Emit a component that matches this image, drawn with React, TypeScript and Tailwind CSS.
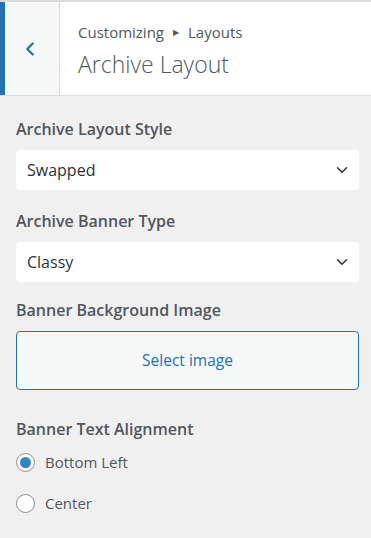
import { ChevronDown, ChevronLeft } from 'lucide-react';

function Label({ children }: { children: string }) {
    return <div className="text-[16px] font-semibold text-[#50575e] leading-5 mb-[11px]">{children}</div>;
}

function Select({ value }: { value: string }) {
    return (
        <div className="h-10 bg-white rounded-[4px] flex items-center justify-between pl-[11px] pr-[8px]">
            <span className="text-[16px] text-[#2c3338]">{value}</span>
            <ChevronDown className="w-[18px] h-[18px] text-[#2c3338]" strokeWidth={2} />
        </div>
    );
}

function Radio({ label, checked }: { label: string; checked?: boolean }) {
    return (
        <label className="flex items-center gap-[10px] h-6">
            <span className="w-[19px] h-[19px] rounded-full border border-[#8c8f94] bg-white flex items-center justify-center">
                {checked && <span className="w-[11px] h-[11px] rounded-full bg-[#3582c4]" />}
            </span>
            <span className="text-[15px] text-[#50575e]">{label}</span>
        </label>
    );
}

export default function App() {
    return (
        <div className="w-[371px] h-[538px] bg-[#f0f0f1] font-['Open_Sans',sans-serif] overflow-hidden">
            <div className="h-[2px] bg-[#dcdcde]" />
            <div className="flex h-[94px] bg-white border-b border-[#dcdcde]">
                <div className="w-[60px] flex bg-[#f6f7f7] border-r border-[#dcdcde]">
                    <div className="w-[5px] bg-[#2271b1]" />
                    <div className="flex-1 flex items-center justify-center pr-[4px]">
                        <ChevronLeft className="w-[22px] h-[22px] text-[#2271b1]" strokeWidth={2.5} />
                    </div>
                </div>
                <div className="flex-1 pl-[18px] pt-[20px]">
                    <div className="text-[15px] text-[#50575e] leading-5 flex items-center">
                        Customizing
                        <span className="mx-[9px] text-[8px]">▶</span>
                        Layouts
                    </div>
                    <div className="text-[23px] font-light text-[#50575e] leading-7 mt-[8px]">Archive Layout</div>
                </div>
            </div>
            <div className="px-[16px] pt-[23px] pr-[12px]">
                <Label>Archive Layout Style</Label>
                <Select value="Swapped" />
                <div className="h-[21px]" />
                <Label>Archive Banner Type</Label>
                <Select value="Classy" />
                <div className="h-[18px]" />
                <Label>Banner Background Image</Label>
                <button className="w-full h-[59px] border border-[#2271b1] rounded-[4px] bg-[#f6f7f7] text-[15.5px] text-[#2271b1]">
                    Select image
                </button>
                <div className="h-[29px]" />
                <Label>Banner Text Alignment</Label>
                <div className="flex flex-col gap-[17px]">
                    <Radio label="Bottom Left" checked />
                    <Radio label="Center" />
                </div>
            </div>
        </div>
    );
}
